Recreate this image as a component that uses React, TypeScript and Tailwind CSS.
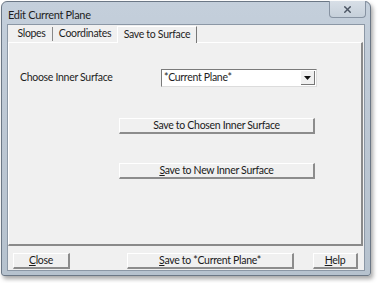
import { X } from 'lucide-react';

const font = { fontFamily: 'Lato, "Liberation Sans", Arial, sans-serif' };

function Btn({ children, className = '' }: { children: React.ReactNode; className?: string }) {
  return (
    <button
      className={`h-[16px] bg-[#f0f0f0] border-t border-l border-t-[#ffffff] border-l-[#ffffff] border-r-2 border-b-2 border-r-[#8c8c8c] border-b-[#8c8c8c] text-[10.5px] tracking-[-0.3px] leading-none text-[#1a1a1a] flex items-center justify-center ${className}`}
    >
      {children}
    </button>
  );
}

export default function App() {
  return (
    <div className="w-[378px] h-[283px] bg-white overflow-hidden" style={font}>
      <div className="ml-[1px] mt-[1px] w-[370px] h-[275px] rounded-t-[6px] rounded-b-[3px] border border-[#6b7785] bg-gradient-to-b from-[#c4cfdb] via-[#bcc7d3] to-[#b6c2ce] shadow-[2px_3px_4px_rgba(0,0,0,0.35)] flex flex-col">
        {/* Title bar */}
        <div className="h-[22px] flex items-start justify-between pl-[6px]">
          <span className="mt-[5px] text-[11px] tracking-[-0.3px] text-[#1e1e1e]">Edit Current Plane</span>
          <div className="mr-[4px] mt-[-1px] w-[37px] h-[17px] rounded-b-[4px] border border-t-0 border-[#8793a2] bg-gradient-to-b from-[#d8dfe7] to-[#c6d0da] flex items-center justify-center">
            <X className="w-[11px] h-[11px] text-[#4b5563]" strokeWidth={3.2} />
          </div>
        </div>

        {/* Client area */}
        <div className="mx-[5px] mb-[4px] flex-1 bg-[#f0f0f0] border border-[#8b97a5] flex flex-col">
          {/* Tabs */}
          <div className="h-[17px] flex items-end pl-[1px] text-[10.5px] tracking-[-0.3px] text-[#1e1e1e]">
            <div className="h-[14px] w-[44px] mb-[1px] pl-[2px] flex items-center justify-center border-r border-[#888]">Slopes</div>
            <div className="h-[16px] w-[64px] flex items-center justify-center">Coordinates</div>
            <div className="h-[17px] w-[80px] flex items-center justify-center bg-[#f0f0f0] border border-b-0 border-t-[#fff] border-l-[#fff] border-r-[#777] relative z-10 translate-y-[1px]">
              Save to Surface
            </div>
          </div>
          {/* Tab panel */}
          <div className="mr-[1px] h-[204px] border-t border-l border-t-[#ffffff] border-l-[#ffffff] border-r-2 border-b-2 border-r-[#8a8a8a] border-b-[#8a8a8a] bg-[#f0f0f0] flex flex-col">
            <div className="mt-[26px] flex items-center text-[10.5px] tracking-[-0.3px] text-[#1e1e1e]">
              <span className="ml-[11px] w-[141px]">Choose Inner Surface</span>
              <div className="w-[156px] h-[18px] bg-white border border-[#7a7a7a] border-r-[#dcdcdc] border-b-[#dcdcdc] flex items-center pl-[2px]">
                <span className="flex-1">*Current Plane*</span>
                <div className="w-[14px] h-[14px] mr-[1px] bg-[#f0f0f0] border-r border-b border-[#777] flex items-center justify-center">
                  <svg width="7" height="4" viewBox="0 0 7 4"><path d="M0 0h7L3.5 4z" fill="#111" /></svg>
                </div>
              </div>
            </div>
            <div className="mt-[31px] ml-[110px]">
              <Btn className="w-[196px]">Save to Chosen Inner Surface</Btn>
            </div>
            <div className="mt-[29px] ml-[110px]">
              <Btn className="w-[196px]">
                <span><span className="underline">S</span>ave to New Inner Surface</span>
              </Btn>
            </div>
          </div>
          {/* Bottom buttons */}
          <div className="mt-[7px] flex items-center">
            <Btn className="ml-[5px] w-[57px]">
              <span><span className="underline">C</span>lose</span>
            </Btn>
            <Btn className="ml-[57px] w-[167px]">
              <span><span className="underline">S</span>ave to *Current Plane*</span>
            </Btn>
            <Btn className="ml-[19px] w-[45px]">
              <span><span className="underline">H</span>elp</span>
            </Btn>
          </div>
        </div>
      </div>
    </div>
  );
}
